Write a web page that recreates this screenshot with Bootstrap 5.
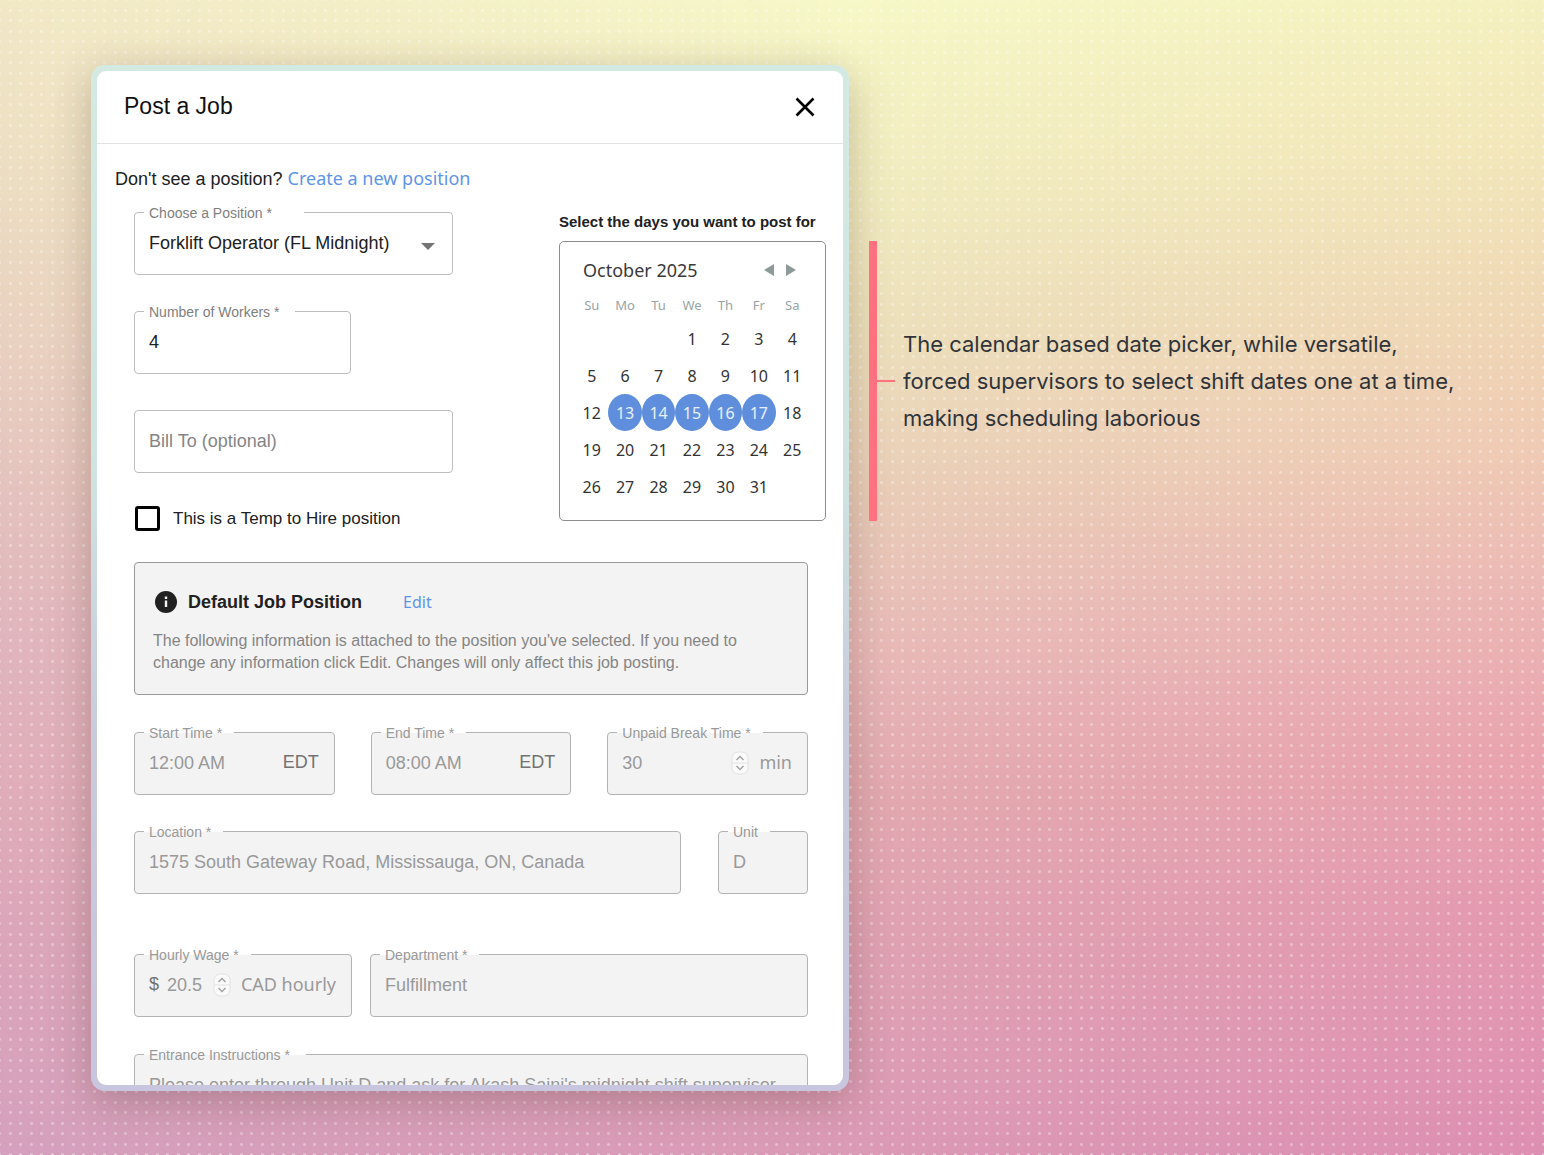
<!DOCTYPE html>
<html lang="en">
<head>
<meta charset="utf-8">
<meta name="viewport" content="width=device-width, initial-scale=1">
<title>Post a Job</title>
<link href="https://cdn.jsdelivr.net/npm/bootstrap@5.3.0/dist/css/bootstrap.min.css" rel="stylesheet">
<style>
:root { --arial: "Liberation Sans", Arial, sans-serif; --noto: "Noto Sans", "Open Sans", sans-serif; }
body {
  position: relative; isolation: isolate;
  font-family: var(--arial);
  color: #212121;
  min-height: 100vh;
  background: linear-gradient(#f7f8c8, #f1ecc0 17%, #ecdfbc 30%, #e9cdb8 43%, #e8bab8 56%, #e2a9b0 69%, #dfa2b3 82%, #db9ab6);
}
body::before, body::after { content: ""; position: absolute; inset: 0; z-index: -1; }
body::before {
  background: linear-gradient(#f1e8c6, #ecdcc2 17%, #e8cfc0 31%, #e3bfbd 45%, #e0b5bd 55%, #dfadb9 68%, #dba6b9 80%, #d4a0bd);
  -webkit-mask: linear-gradient(to right, #000, transparent 55%); mask: linear-gradient(to right, #000, transparent 55%);
}
body::after {
  background: linear-gradient(#f4f0bf, #f2e6ba 13%, #efd8b5 26%, #efcab4 39%, #ebb6b4 52%, #e9a4ae 65%, #e49ab0 78%, #dd8fb2);
  -webkit-mask: linear-gradient(to left, #000, transparent 45%); mask: linear-gradient(to left, #000, transparent 45%);
}
.stage {
  display: grid; grid-template-columns: minmax(0, 758fr) minmax(0, 695fr);
  min-height: 100vh; padding: 65px 0 64px 91px;
  --dot: radial-gradient(circle at center, rgba(255,255,255,.32) 1px, transparent 2px);
  background:
    var(--dot) 0 0 / 21px 21px, var(--dot) 10px 0 / 21px 21px,
    var(--dot) 0 10px / 21px 21px, var(--dot) 10px 10px / 21px 21px;
}
.frame {
  height: calc(100vh - 129px);
  padding: 6px;
  border-radius: 14px;
  background: linear-gradient(#d3eae2, #cfe3e0 40%, #c8cbdc 65%, #c8c5de);
  box-shadow: 0 10px 40px rgba(70,40,30,.28);
}
.sheet { height: 100%; border-radius: 9px; background: #fff; overflow: hidden; }
.sheet-head { height: 73px; padding: 0 28px 0 27px; border-bottom: 1px solid #e2e2e2; }
.sheet-head h1 { font-size: 23px; font-weight: 400; color: #111; }
.close-x { border: 0; background: none; padding: 0; line-height: 0; }
.sheet-body { padding: 21px 17px 0 18px; font-size: 18px; }
.link-noto { font-family: var(--noto); color: #5f95e6; text-decoration: none; }
.form-area { padding: 19px 0 0 19px; }
.lower { margin-right: 18px; }
.fld {
  position: relative; display: flex; align-items: center;
  height: 63px; padding: 0 15px 2px 14px;
  border: 1px solid #bdbdbd; border-radius: 4px; background: #fff;
}
.fld.off { background: #f3f3f3; border-color: #b3b3b3; color: #999; }
.fld > label {
  position: absolute; left: 9px; top: -9px;
  padding: 0 12px 0 5px;
  font-size: 14px; line-height: 18px; color: #808080; white-space: nowrap;
  background: linear-gradient(#fff, #fff);
}
.fld.off > label { color: #999; background: linear-gradient(#fff 50%, #f3f3f3 50%); }
.fld > label.roomy { padding-right: 16px; }
.fld > label.roomiest { padding-right: 32px; }
.fld input, .fld select {
  flex: 1 1 0; min-width: 0; width: 100%;
  border: 0; padding: 0; margin: 0; background: none; outline: 0;
  font-family: var(--arial); font-size: 18px; line-height: 24px;
  color: #212121; appearance: none; opacity: 1;
}
.fld input::placeholder { color: #858585; opacity: 1; }
.fld.off input { color: #999; -webkit-text-fill-color: #999; }
.zone { color: #727272; }
.unit-text { font-family: var(--noto); color: #999; margin-left: 10px; white-space: nowrap; }
.spin { flex: none; }
.caret { position: absolute; right: 17px; top: 30px; pointer-events: none; }
.half { width: 68%; }
.left-col { flex: 0 1 319px; display: flex; flex-direction: column; gap: 36px; }
.right-col { flex: 0 0 267px; }
.temp-row { display: flex; align-items: center; gap: 13px; padding-left: 1px; margin-top: -3px; height: 25px; }
.temp-row label { font-size: 17px; line-height: 24px; }
.tick { width: 25px; height: 25px; margin: 0; appearance: none; border: 3px solid #000; border-radius: 3px; background: #fff; }
.tick:checked { background: #000; }
.cal-title { font-size: 15px; line-height: 20px; font-weight: 700; white-space: nowrap; margin-bottom: 9px; }
.cal { height: 280px; padding: 14px 16px 0 15px; border: 1px solid #8c8c8c; border-radius: 5px; font-family: var(--noto); }
.cal-head { padding: 0 13px 0 8px; height: 28px; font-size: 18px; color: #3a3a3a; }
.cal-head button { border: 0; background: none; padding: 0; line-height: 0; }
.cal-nav { display: flex; gap: 12px; }
.cal table { width: 100%; table-layout: fixed; border-collapse: collapse; text-align: center; }
.cal th { height: 36px; padding: 5px 0 0; line-height: 26px; font-size: 13px; font-weight: 400; color: #95a5a6; }
.cal td { height: 37px; padding: 0; }
.cal td button { display: block; width: 100%; height: 37px; padding: 0; border: 0; background: none; font-size: 16px; color: #333; }
.cal td button.on { background: #5f8fdc; color: #e8effa; border-radius: 50%; }
.note-box { margin-top: 31px; height: 133px; padding: 26px 20px 0 18px; border: 1px solid #999; border-radius: 4px; background: #f3f3f3; }
.note-head { display: flex; align-items: center; }
.note-head svg { margin: 0 11px 0 2px; }
.note-box h2 { font-size: 18px; line-height: 26px; font-weight: 700; margin: 0 41px 0 0; }
.note-box p { font-size: 16px; line-height: 22px; color: #858585; margin: 0; padding-top: 15px; white-space: nowrap; }
.note-box a { font-size: 16px; }
.thirds { display: grid; grid-template-columns: repeat(3, 1fr); gap: 36px; margin-top: 37px; }
.place { display: grid; grid-template-columns: 547fr 90fr; gap: 37px; margin-top: 36px; }
.pay { display: grid; grid-template-columns: 218fr 438fr; gap: 18px; margin-top: 60px; }
.entrance { margin-top: 37px; }
.callout { margin: 176px 0 0 20px; display: flex; align-items: center; height: 280px; }
.callout .bar { flex: none; width: 8px; height: 100%; background: #ff7080; }
.callout .dash { flex: none; width: 18px; height: 2px; background: #ff7080; margin-right: 8px; }
.callout p { font-family: Inter, sans-serif; font-size: 22px; line-height: 37px; color: #30343a; margin: 0; white-space: nowrap; }
</style>
<script src="https://cdn.jsdelivr.net/npm/bootstrap@5.3.0/dist/js/bootstrap.bundle.min.js"></script>
</head>
<body>
<main class="stage">
  <section class="frame">
    <div class="sheet">
      <header class="sheet-head d-flex align-items-center justify-content-between">
        <h1 class="m-0">Post a Job</h1>
        <button type="button" class="close-x" aria-label="Close">
          <svg width="20" height="20" viewBox="0 0 20 20" stroke="#000" stroke-width="2.600"><path d="M1.500 1.500 18.500 18.500M18.500 1.500 1.500 18.500"/></svg>
        </button>
      </header>
      <form class="sheet-body">
        <div class="lh-base">Don't see a position? <a href="#" class="link-noto">Create a new position</a></div>
        <div class="form-area">
          <div class="d-flex justify-content-between">
            <div class="left-col">
              <div class="fld">
                <label for="position" class="roomiest">Choose a Position *</label>
                <select id="position"><option>Forklift Operator (FL Midnight)</option></select>
                <svg class="caret" width="14" height="7" viewBox="0 0 14 7"><path d="M0 0h14L7 7z" fill="#757575"/></svg>
              </div>
              <div class="fld half">
                <label for="workers" class="roomy">Number of Workers *</label>
                <input id="workers" type="text" value="4">
              </div>
              <div class="fld">
                <input id="bill" type="text" placeholder="Bill To (optional)" aria-label="Bill To (optional)">
              </div>
              <div class="temp-row">
                <input type="checkbox" id="temp" class="tick">
                <label for="temp">This is a Temp to Hire position</label>
              </div>
            </div>
            <div class="right-col">
              <div class="cal-title">Select the days you want to post for</div>
              <div class="cal">
                <div class="cal-head d-flex align-items-center justify-content-between">
                  <span>October 2025</span>
                  <span class="cal-nav">
                    <button type="button" aria-label="Previous month"><svg width="10" height="12" viewBox="0 0 10 12"><path d="M10 0v12L0 6z" fill="#8d9a9a"/></svg></button>
                    <button type="button" aria-label="Next month"><svg width="10" height="12" viewBox="0 0 10 12"><path d="M0 0v12l10-6z" fill="#8d9a9a"/></svg></button>
                  </span>
                </div>
                <table>
                  <thead><tr><th>Su</th><th>Mo</th><th>Tu</th><th>We</th><th>Th</th><th>Fr</th><th>Sa</th></tr></thead>
                  <tbody>
                    <tr><td></td><td></td><td></td><td><button type="button">1</button></td><td><button type="button">2</button></td><td><button type="button">3</button></td><td><button type="button">4</button></td></tr>
                    <tr><td><button type="button">5</button></td><td><button type="button">6</button></td><td><button type="button">7</button></td><td><button type="button">8</button></td><td><button type="button">9</button></td><td><button type="button">10</button></td><td><button type="button">11</button></td></tr>
                    <tr><td><button type="button">12</button></td><td><button type="button" class="on">13</button></td><td><button type="button" class="on">14</button></td><td><button type="button" class="on">15</button></td><td><button type="button" class="on">16</button></td><td><button type="button" class="on">17</button></td><td><button type="button">18</button></td></tr>
                    <tr><td><button type="button">19</button></td><td><button type="button">20</button></td><td><button type="button">21</button></td><td><button type="button">22</button></td><td><button type="button">23</button></td><td><button type="button">24</button></td><td><button type="button">25</button></td></tr>
                    <tr><td><button type="button">26</button></td><td><button type="button">27</button></td><td><button type="button">28</button></td><td><button type="button">29</button></td><td><button type="button">30</button></td><td><button type="button">31</button></td><td></td></tr>
                  </tbody>
                </table>
              </div>
            </div>
          </div>
          <div class="lower">
            <div class="note-box">
              <div class="note-head">
                <svg width="22" height="22" viewBox="0 0 22 22"><circle cx="11" cy="11" r="11" fill="#212121"/><path d="M9.800 5.500h2.400v2.400H9.800zM9.800 9.600h2.400v6.400H9.800z" fill="#f3f3f3"/></svg>
                <h2>Default Job Position</h2>
                <a href="#" class="link-noto">Edit</a>
              </div>
              <p>The following information is attached to the position you've selected. If you need to<br>change any information click Edit. Changes will only affect this job posting.</p>
            </div>
            <div class="thirds">
              <div class="fld off"><label for="start">Start Time *</label><input id="start" type="text" value="12:00 AM" disabled><span class="zone">EDT</span></div>
              <div class="fld off"><label for="end">End Time *</label><input id="end" type="text" value="08:00 AM" disabled><span class="zone">EDT</span></div>
              <div class="fld off"><label for="brk">Unpaid Break Time *</label><input id="brk" type="text" value="30" disabled>
                <svg class="spin" width="18" height="24" viewBox="0 0 18 24"><rect x="1" y="1" width="16" height="22" rx="6" fill="#fafafa" stroke="#e2e2e2"/><path d="M1 12h16" stroke="#e2e2e2"/><path d="M5.500 9 9 5.500 12.500 9M5.500 15 9 18.500 12.500 15" fill="none" stroke="#a3a3a3" stroke-width="1.500"/></svg>
                <span class="unit-text">min</span></div>
            </div>
            <div class="place">
              <div class="fld off"><label for="loc">Location *</label><input id="loc" type="text" value="1575 South Gateway Road, Mississauga, ON, Canada" disabled></div>
              <div class="fld off"><label for="unit">Unit</label><input id="unit" type="text" value="D" disabled></div>
            </div>
            <div class="pay">
              <div class="fld off"><label for="wage">Hourly Wage *</label><span class="zone me-2">$</span><input id="wage" type="text" value="20.5" disabled>
                <svg class="spin" width="18" height="24" viewBox="0 0 18 24"><rect x="1" y="1" width="16" height="22" rx="6" fill="#fafafa" stroke="#e2e2e2"/><path d="M1 12h16" stroke="#e2e2e2"/><path d="M5.500 9 9 5.500 12.500 9M5.500 15 9 18.500 12.500 15" fill="none" stroke="#a3a3a3" stroke-width="1.500"/></svg>
                <span class="unit-text">CAD hourly</span></div>
              <div class="fld off"><label for="dept">Department *</label><input id="dept" type="text" value="Fulfillment" disabled></div>
            </div>
            <div class="fld off entrance"><label for="entr" class="roomy">Entrance Instructions *</label><input id="entr" type="text" value="Please enter through Unit D and ask for Akash Saini's midnight shift supervisor" disabled></div>
          </div>
        </div>
      </form>
    </div>
  </section>
  <aside class="callout">
    <div class="bar"></div><div class="dash"></div>
    <p>The calendar based date picker, while versatile,<br>forced supervisors to select shift dates one at a time,<br>making scheduling laborious</p>
  </aside>
</main>
</body>
</html>
